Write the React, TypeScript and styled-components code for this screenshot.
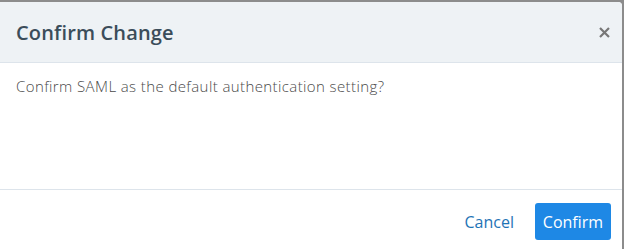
import React from "react";
import styled, { createGlobalStyle } from "styled-components";

const Global = createGlobalStyle`
  html, body { margin: 0; padding: 0; background: #ffffff; }
  body { font-family: "Open Sans", "Noto Sans", sans-serif; }
`;

const Backdrop = styled.div`
  width: 624px;
  height: 249px;
  background: #8c8c8c;
  padding-top: 2px;
  box-sizing: border-box;
  overflow: hidden;
`;

const Modal = styled.div`
  width: 622px;
  height: 260px;
  background: #ffffff;
  border-top-right-radius: 4px;
  display: flex;
  flex-direction: column;
`;

const Header = styled.div`
  height: 61px;
  background: #eef2f5;
  border-bottom: 1px solid #dde4eb;
  border-top-right-radius: 4px;
  display: flex;
  align-items: center;
  justify-content: space-between;
  padding: 1px 10px 0 16px;
  box-sizing: border-box;
  flex: none;
`;

const Title = styled.h2`
  margin: 0;
  font-size: 20px;
  font-weight: 600;
  color: #3b4d5a;
  letter-spacing: 0.15px;
`;

const Close = styled.button`
  border: none;
  background: transparent;
  padding: 0;
  width: 16px;
  height: 16px;
  display: flex;
  align-items: center;
  justify-content: center;
  cursor: pointer;
`;

const Body = styled.div`
  height: 127px;
  padding: 13px 16px 0;
  box-sizing: border-box;
  font-size: 15px;
  font-weight: 300;
  letter-spacing: 0.4px;
  color: #4a4a4a;
  border-bottom: 1px solid #dde4eb;
  flex: none;
`;

const Footer = styled.div`
  display: flex;
  justify-content: flex-end;
  align-items: center;
  gap: 21px;
  padding: 13px 11px 0 0;
`;

const LinkButton = styled.button`
  border: none;
  background: transparent;
  font-family: inherit;
  font-size: 16px;
  color: #1f74b6;
  padding: 0;
  cursor: pointer;
`;

const PrimaryButton = styled.button`
  border: none;
  background: #1e88e5;
  color: #ffffff;
  font-family: inherit;
  font-size: 16px;
  border-radius: 3px;
  height: 37px;
  width: 76px;
  padding: 0;
  cursor: pointer;
`;

export default function App() {
  return (
    <>
      <Global />
      <Backdrop>
        <Modal>
          <Header>
            <Title>Confirm Change</Title>
            <Close aria-label="Close">
              <svg width="11" height="11" viewBox="0 0 11 11">
                <path d="M1 1 L10 10 M10 1 L1 10" stroke="#777" strokeWidth="2.2" strokeLinecap="butt" />
              </svg>
            </Close>
          </Header>
          <Body>Confirm SAML as the default authentication setting?</Body>
          <Footer>
            <LinkButton>Cancel</LinkButton>
            <PrimaryButton>Confirm</PrimaryButton>
          </Footer>
        </Modal>
      </Backdrop>
    </>
  );
}
